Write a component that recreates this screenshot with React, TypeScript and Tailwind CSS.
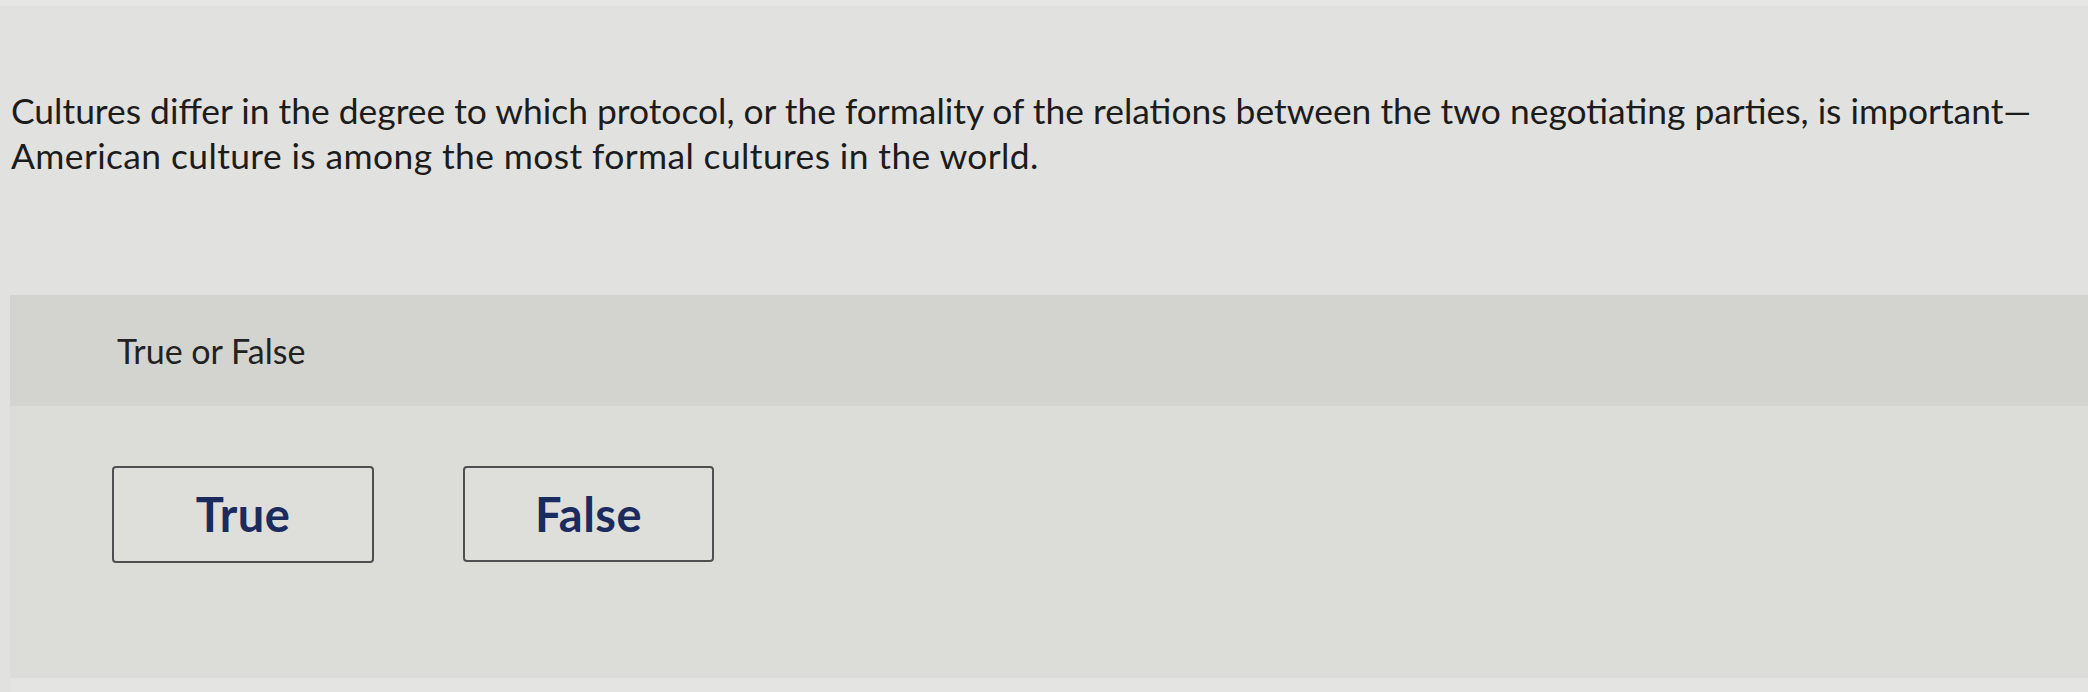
export default function App() {
  return (
    <main
      className="flex h-[692px] w-[2088px] flex-col overflow-hidden bg-[#e1e1df] text-[#1e1e1e]"
      style={{ fontFamily: "Lato, 'Noto Sans', sans-serif" }}
    >
      <div className="h-[6px] bg-[#e6e6e4]" />
      <section className="px-[11px] pt-[82px] text-[35.4px] leading-[45px] text-[#1c1c1c]">
        Cultures differ in the degree to which protocol, or the formality of the relations between the two negotiating parties, is important—
        <br />
        <span className="tracking-[0.4px]">American culture is among the most formal cultures in the world.</span>
      </section>

      <div className="mt-[117px] flex flex-1 flex-col pl-[10px]">
        <div className="flex h-[111px] items-center bg-[#d3d3d0] pl-[107px]">
          <span className="text-[34px] text-[#222]">True or False</span>
        </div>
        <div className="flex flex-1 flex-col bg-[#dcdcd9]">
          <div className="flex gap-[89px] pl-[102px] pt-[60px]">
            <button
              type="button"
              className="flex h-[97px] w-[262px] items-center justify-center rounded-[4px] border-2 border-[#4f4f52] bg-[#dededb] text-[47px] font-bold tracking-[0.5px] text-[#1c2b5e]"
            >
              True
            </button>
            <button
              type="button"
              className="flex h-[96px] w-[251px] items-center justify-center rounded-[4px] border-2 border-[#4f4f52] bg-[#dededb] text-[47px] font-bold tracking-[0.5px] text-[#1c2b5e]"
            >
              False
            </button>
          </div>
          <div className="flex-1" />
          <div className="h-[14px] bg-[#e4e4e2]" />
        </div>
      </div>
    </main>
  );
}
